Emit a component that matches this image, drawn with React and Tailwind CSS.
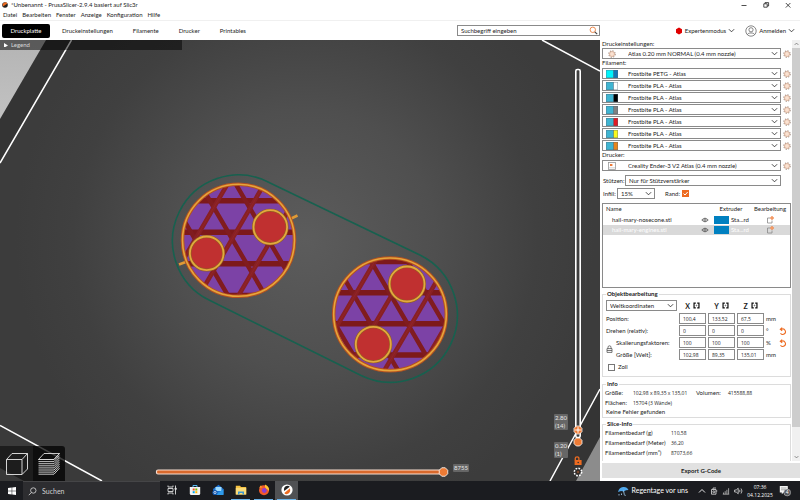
import React from 'react';

const Chevron = ({ className = 'w-[7px]' }) => (
  <svg viewBox="0 0 8 8" className={`pointer-events-none shrink-0 ${className}`} fill="none" stroke="currentColor" strokeWidth=".9">
    <path d="M1 2.5 4 5.5 7 2.5" />
  </svg>
);

const Cog = () => (
  <svg viewBox="0 0 10 10" className="w-[8px] shrink-0" fill="none">
    <circle cx="5" cy="5" r="4" stroke="#a08c80" strokeWidth="1.3" strokeDasharray="1.57 1.57" />
    <circle cx="5" cy="5" r="3.2" fill="#fbe3d3" stroke="#cfa48c" strokeWidth=".9" />
    <circle cx="5" cy="5" r="1.5" fill="#fdf3ec" stroke="#f2c4a8" strokeWidth=".6" />
  </svg>
);

const PrinterIcon = () => (
  <svg viewBox="0 0 8 8" className="w-[8px] shrink-0" fill="none">
    <rect x=".5" y=".5" width="7" height="7" fill="#fff" stroke="#9a9a9a" strokeWidth=".8" />
    <path d="M2 3h2.400" stroke="#ed6b21" strokeWidth="1.800" />
    <path d="M1 5.800h6" stroke="#d4d4d4" />
  </svg>
);

const Swatch = ({ a, b }) => (
  <svg viewBox="0 0 12 8" className="w-[12px] shrink-0">
    <rect width="12" height="8" fill={a} />
    <rect x="7.500" width="4.500" height="8" fill={b} />
    <path d="M7.500 0V8M.2 .2h11.600v7.600H.2z" fill="none" stroke="#567" strokeWidth=".5" />
  </svg>
);

const selectStyle = 'min-w-0 flex-1 appearance-none bg-transparent leading-[8px] outline-none';
const figures = "font-['Open_Sans','Noto_Sans',sans-serif] text-[5px]";

const Combo = ({ label, icon, value }) => (
  <div className="flex items-center gap-[2px]">
    <div className="flex h-[11px] min-w-0 flex-1 items-center border border-[#8a8a8a] bg-white">
      <span className="flex w-[25px] shrink-0 items-center pl-[3px]">
        <span className="flex w-[12px] justify-center">{icon}</span>
      </span>
      <select aria-label={label} className={selectStyle}>
        <option>{value}</option>
      </select>
      <Chevron className="mr-[2px] w-[7px]" />
    </div>
    <button aria-label={`${label} bearbeiten`} className="flex w-[8px]"><Cog /></button>
  </div>
);

const filaments = [
  ['Frostbite PETG - Atlas', '#00f4fb', '#1378b8'],
  ['Frostbite PLA - Atlas', '#3fb5d2', '#ffffff'],
  ['Frostbite PLA - Atlas', '#3fb5d2', '#000000'],
  ['Frostbite PLA - Atlas', '#3fb5d2', '#808080'],
  ['Frostbite PLA - Atlas', '#3fb5d2', '#e01b24'],
  ['Frostbite PLA - Atlas', '#3fb5d2', '#f8f81c'],
  ['Frostbite PLA - Atlas', '#3fb5d2', '#e8851c'],
];

function TitleBar() {
  return (
    <div className="flex h-[10px] items-center pl-[2px]">
      <svg viewBox="0 0 6 6" className="mr-[3px] w-[6px]">
        <circle cx="3" cy="3" r="2.800" fill="#222" />
        <path d="M.6 2.600A2.600 2.600 0 0 1 5.400 1.600L1 4.600z" fill="#ed6b21" />
      </svg>
      <span className="flex-1">*Unbenannt - PrusaSlicer-2.9.4 basiert auf Slic3r</span>
      <div className="flex items-center gap-[14px] pr-[8px]">
        <button aria-label="Minimieren"><svg viewBox="0 0 8 8" className="w-[8px]" stroke="#222" strokeWidth=".8"><path d="M1.500 4.500h5" /></svg></button>
        <button aria-label="Wiederherstellen"><svg viewBox="0 0 8 8" className="w-[8px]" fill="none" stroke="#222" strokeWidth=".8"><path d="M1.800 2.800h3.400v3.400H1.800zM3 2.800V1.600h3.600V5H5.200" /></svg></button>
        <button aria-label="Schließen"><svg viewBox="0 0 8 8" className="w-[8px]" fill="none" stroke="#222" strokeWidth=".8"><path d="M1.800 2 6.400 6.600M6.400 2 1.800 6.600" /></svg></button>
      </div>
    </div>
  );
}

function Header() {
  return (
    <header className="shrink-0 bg-white text-[6px] leading-[8px]">
      <TitleBar />
      <nav className="flex h-[10px] items-center gap-[5px] pl-[3px]">
        {['Datei', 'Bearbeiten', 'Fenster', 'Anzeige', 'Konfiguration', 'Hilfe'].map((m) => (
          <button key={m}>{m}</button>
        ))}
      </nav>
      <div className="flex h-[20px] items-center border-t border-[#f0f0f0] pl-[2px]">
        <button className="h-[14px] w-[48px] rounded-[2px] bg-black text-white">Druckplatte</button>
        <div className="flex flex-1 gap-[20px] pl-[12px]">
          {['Druckeinstellungen', 'Filamente', 'Drucker', 'Printables'].map((t) => (
            <button key={t}>{t}</button>
          ))}
        </div>
        <label className="flex h-[11px] w-[143px] items-center border border-[#8a8a8a] bg-white pl-[3px]">
          <input aria-label="Suche" placeholder="Suchbegriff eingeben" className="min-w-0 flex-1 bg-transparent outline-none placeholder:text-[#222]" />
          <svg viewBox="0 0 9 9" className="mr-[1px] w-[9px]" fill="none">
            <circle cx="3.800" cy="3.800" r="2.700" stroke="#ed8b50" />
            <path d="m5.800 5.800 2.400 2.400" stroke="#444" strokeWidth="1.200" />
          </svg>
        </label>
        <div className="flex w-[200px] items-center justify-end pr-[5px]">
          <button className="flex items-center">
            <svg viewBox="0 0 8 8" className="mr-[2px] w-[8px]"><path d="M4 .6 7 2.300v3.400L4 7.400 1 5.700V2.300z" fill="#e00000" /></svg>
            Expertenmodus
            <Chevron className="ml-[2px] w-[7px]" />
          </button>
          <button className="ml-[10px] flex items-center">
            <svg viewBox="0 0 12 12" className="mr-[2px] w-[12px]" fill="none" stroke="#555" strokeWidth=".7">
              <circle cx="6" cy="6" r="5.200" />
              <circle cx="6" cy="4.800" r="2.100" />
              <path d="M2.400 9.600C3 7.400 9 7.400 9.600 9.600" />
            </svg>
            Anmelden
            <Chevron className="ml-[2px] w-[7px]" />
          </button>
        </div>
      </div>
    </header>
  );
}

const octagon = (cx, cy, r) =>
  Array.from({ length: 8 }, (_, i) => {
    const t = (Math.PI / 4) * i + Math.PI / 8;
    return `${cx + r * Math.cos(t)},${cy + r * Math.sin(t)}`;
  }).join(' ');

function Infill({ id, cx, cy, r, rows, axis, back, forward, holes, hr }) {
  const slope = 0.585;
  const line = (x, s) => `M${x - s * 70} ${axis - 70}L${x + s * 70} ${axis + 70}`;
  return (
    <g>
      <clipPath id={id}><circle cx={cx} cy={cy} r={r} /></clipPath>
      <g clipPath={`url(#${id})`}>
        <circle cx={cx} cy={cy} r={r} fill="#7c42a6" />
        <path d={rows.map((y) => `M${cx - 60} ${y}h120`).join('')} stroke="#7d191b" strokeWidth="5.500" />
        <path d={back.map((x) => line(x, slope)).join('')} stroke="#801c1f" strokeWidth="4.500" />
        <path d={forward.map((x) => line(x, -slope)).join('')} stroke="#872024" strokeWidth="4.500" />
        <path d={forward.map((x) => line(x, -slope)).join('')} stroke="#9a2629" strokeWidth=".6" />
      </g>
      <circle cx={cx} cy={cy} r={r} fill="none" stroke="#b5521f" strokeWidth="3.600" />
      <circle cx={cx} cy={cy} r={r} fill="none" stroke="#e6a53c" strokeWidth="1.600" />
      {holes.map(([x, y]) => (
        <g key={x}>
          <circle cx={x} cy={y} r={hr} fill="#c03030" stroke="#94601f" strokeWidth="3" />
          <circle cx={x} cy={y} r={hr} fill="none" stroke="#e3a83e" strokeWidth="1.800" />
        </g>
      ))}
    </g>
  );
}

function Scene() {
  return (
    <svg viewBox="0 40 600 441" preserveAspectRatio="xMidYMid slice" className="absolute inset-0 h-full w-full">
      <defs>
        <radialGradient id="bed" gradientUnits="userSpaceOnUse" cx="305" cy="240" r="290">
          <stop offset="0" stopColor="#5c5c5c" />
          <stop offset=".45" stopColor="#4f4f4f" />
          <stop offset=".8" stopColor="#404040" />
          <stop offset="1" stopColor="#3c3c3c" />
        </radialGradient>
        <linearGradient id="floor" x1="0" y1="0" x2="0" y2="1">
          <stop offset="0" stopColor="#b4b4b4" />
          <stop offset="1" stopColor="#c2c2c2" />
        </linearGradient>
      </defs>
      <rect y="40" width="600" height="441" fill="url(#bed)" />
      <path d="M0 40H71.500L0 163z" fill="#343434" />
      <path d="M0 40H46L0 119z" fill="url(#floor)" />
      <path d="M542 40H600V71z" fill="#383838" />
      <path d="M600 389V481H550z" fill="#343434" />
      <path d="M600 437V481H576z" fill="#8c8c8c" />
      <path d="M0 425.500V481H102z" fill="#3a3a3a" />
      <path d="M0 468 24 481H0z" fill="#707070" />
      <path d="M71.500 40 0 163M542 40 600 71M0 425.500 102 481M600 389 550 481" stroke="#fff" strokeWidth="1.500" fill="none" />
      <path d="M267.500 181.700A66 66 0 0 0 209.500 300.300L361.600 375.700A67 67 0 0 0 420.400 255.300Z" fill="none" stroke="#17614f" strokeWidth="1.600" />
      <path d="M288 220 297.500 215.500M179 264.500 187 261.500" stroke="#e09a35" strokeWidth="2.600" />
      <Infill id="discA" cx={238.5} cy={240.3} r={56} rows={[200.7, 232.3, 263.7, 295.5]} axis={232.3}
        back={[191, 228.3, 264, 302]} forward={[199.3, 236, 275.5, 312]} holes={[[270.3, 227], [206.7, 253.3]]} hr={16.8} />
      <Infill id="discB" cx={390} cy={314.3} r={56.3} rows={[261.5, 292.7, 323.7, 355]} axis={323.7}
        back={[335, 370.7, 407.5, 444]} forward={[338.3, 375, 411.7, 447]} holes={[[407, 284], [373.3, 344.3]]} hr={17.5} />
    </svg>
  );
}

function LayerSlider() {
  return (
    <div className="absolute top-[28px] right-[16px] bottom-[3px] w-[12px]">
      <svg viewBox="0 0 12 410" preserveAspectRatio="none" className="h-full w-full" fill="none">
        <rect x="3.800" y="1.500" width="4.400" height="368" rx="1.600" fill="#3e3e3e" stroke="#fff" strokeWidth="1.600" />
        <polygon points={octagon(6, 362, 4.3)} fill="#ed7b35" stroke="#fff" strokeWidth=".8" />
        <path d="M3.200 362h5.600M6 359.200v5.600" stroke="#fff" />
        <polygon points={octagon(6, 374, 4.3)} fill="#ed7b35" stroke="#fff" strokeWidth=".8" />
        <rect x="2.600" y="392" width="7" height="5" fill="#ed6b21" />
        <path d="M3.300 392.500v-2.200q0-1.500 1.800-1.500t1.800 1.500v2" stroke="#ed6b21" strokeWidth="1.300" />
        <circle cx="6.200" cy="394.500" r=".8" fill="#333" />
        <circle cx="6" cy="404" r="3.700" stroke="#fff" strokeWidth="1.500" strokeDasharray="1.750 1.150" />
        <circle cx="6" cy="404" r="1.800" fill="#7a4a30" stroke="#222" strokeWidth=".7" />
      </svg>
      <input type="range" aria-label="Schicht" className="absolute inset-0 h-full w-full opacity-0 [writing-mode:vertical-lr]" />
    </div>
  );
}

function MoveSlider() {
  return (
    <div className="absolute right-[151px] bottom-[3px] left-[155px] h-[12px]">
      <svg viewBox="0 0 294 12" preserveAspectRatio="none" className="h-full w-full">
        <rect x="1.500" y="4" width="288" height="4" rx="1.500" fill="#d9692c" stroke="#f6ddd0" strokeWidth="1.200" />
        <polygon points={octagon(288.5, 6, 4.6)} fill="#ed7b35" stroke="#fff" strokeWidth=".8" />
      </svg>
      <input type="range" aria-label="Bewegung" className="absolute inset-0 h-full w-full opacity-0" />
    </div>
  );
}

const tag = 'absolute rounded-[1px] bg-[#666666] text-[#e6e6e6]';

function Viewport() {
  return (
    <main className="relative min-w-0 flex-1 overflow-hidden bg-[#3c3c3c] text-[6px] leading-[8px]">
      <Scene />
      <button className="absolute top-0 left-0 flex h-[10px] w-[182px] items-center bg-black/50 pl-[4px] text-[#d8d8d8]">
        <svg viewBox="0 0 5 6" className="mr-[3px] w-[4px]"><path d="M0 0 5 3 0 6z" fill="#fff" /></svg>
        Legend
      </button>
      <LayerSlider />
      <MoveSlider />
      <div className={`${tag} right-[32px] bottom-[51px] w-[14px] pl-[1px]`}>2.80<br />(14)</div>
      <div className={`${tag} right-[32px] bottom-[23px] w-[14px] pl-[1px]`}>0.20<br />(1)</div>
      <div className={`${tag} right-[131px] bottom-[9px] w-[16px] text-center`}>8755</div>
      <div className="absolute bottom-0 left-0 flex h-[35px] overflow-hidden rounded-tr-[3px]">
        <button aria-label="3D-Ansicht" className="flex w-[33px] items-center justify-center bg-black/50">
          <svg viewBox="0 0 24 24" className="w-[24px]" fill="none" stroke="#e8e8e8" strokeWidth=".9">
            <path d="M1.500 7.500H17V22.500H1.500zM1.500 7.500 7 1.500H22.500L17 7.500M22.500 1.500V17L17 22.500" />
          </svg>
        </button>
        <button aria-label="Vorschau" className="flex w-[32px] items-center justify-center bg-black/75">
          <svg viewBox="0 0 24 24" className="w-[24px]" fill="none" stroke="#dcdcdc" strokeWidth=".9">
            <path d="M1.500 7.500 7 1.500H22.500L17 7.500z" />
            <path d="M1.500 7.500H17L22.500 1.500M1.500 9.600H17L22.500 3.600M1.500 11.700H17L22.500 5.700M1.500 13.800H17L22.500 7.800M1.500 15.900H17L22.500 9.900M1.500 18H17L22.500 12M1.500 20.100H17L22.500 14.100M1.500 22.200H17L22.500 16.200" />
          </svg>
        </button>
      </div>
    </main>
  );
}

const Eye = () => (
  <svg viewBox="0 0 8 8" className="mx-auto w-[8px]" fill="none" stroke="#555" strokeWidth=".8">
    <path d="M.8 4Q4 .4 7.200 4 4 7.600.8 4z" /><circle cx="4" cy="4" r="1.200" />
  </svg>
);

const EditIcon = () => (
  <svg viewBox="0 0 8 8" className="mx-auto w-[8px]" fill="none" strokeWidth=".8">
    <path d="M4 2H1.500v5H6V4.500" stroke="#888" /><circle cx="6" cy="2" r="1.300" stroke="#ed6b21" fill="#f8c8a8" />
  </svg>
);

function ObjectList() {
  return (
    <div className="mt-[4px] h-[85px] border border-[#8a8a8a] bg-white">
      <table className="w-full table-fixed border-collapse">
        <thead>
          <tr className="h-[10px] text-left">
            <th className="p-0 pl-[3px] font-normal">Name</th>
            <th className="w-[14px] p-0" aria-label="Sichtbar" />
            <th className="w-[38px] p-0 text-center font-normal">Extruder</th>
            <th className="w-[40px] p-0 text-center font-normal">Bearbeitung</th>
          </tr>
        </thead>
        <tbody>
          {['hail-mary-nosecone.stl', 'hail-mary-engines.stl'].map((n, i) => (
            <tr key={n} className={i ? 'h-[10px] bg-[#d9d9d9] text-white' : 'h-[11px]'}>
              <td className="p-0 pl-[9px]">{n}</td>
              <td className="p-0"><Eye /></td>
              <td className="p-0"><span className="flex items-center gap-[2px] pl-[2px]"><span className="h-[8px] w-[15px] bg-[#0080c0]" />Sta...rd</span></td>
              <td className="p-0"><EditIcon /></td>
            </tr>
          ))}
        </tbody>
      </table>
    </div>
  );
}

const AxisHead = ({ axis }) => (
  <div className="flex w-[27px] items-center justify-center gap-[3px] text-[7px] font-bold">
    {axis}
    <svg viewBox="0 0 8 8" className="w-[7px]" fill="none" stroke="#111" strokeWidth="1.400">
      <path d="M3.200 1.200H1.200V6.800h2M4.800 1.200h2v5.600h-2" />
      <circle cx="4" cy="4" r=".5" strokeWidth=".6" />
    </svg>
  </div>
);

const Reset = () => (
  <svg viewBox="0 0 8 8" className="w-[8px]" fill="none" stroke="#ed6b21" strokeWidth="1.100">
    <path d="M1.500 6.200A2.700 2.700 0 1 0 2.600 2.200H1.200M3.200.6 1.300 2.200 3.200 3.800" />
  </svg>
);

const Lock = () => (
  <svg viewBox="0 0 7 8" className="w-[7px]" fill="none" stroke="#555" strokeWidth=".8">
    <path d="M1 3.600h5v3.800H1zM2 3.600V2.200Q2 .8 3.500.8T5 2.200v1.400M1 5.500h5" />
  </svg>
);

const AxisRow = ({ name, label, values, unit, reset, narrow }) => (
  <div className="flex items-center gap-[2px]">
    <span className={narrow ? 'w-[61px]' : 'w-[71px]'}>{label}</span>
    {values.map((v, j) => (
      <input key={j} aria-label={`${name} ${'XYZ'[j]}`} defaultValue={v} className={`h-[11px] w-[27px] border border-[#8a8a8a] bg-white pl-[3px] outline-none ${figures}`} />
    ))}
    <span className="w-[11px]">{unit}</span>
    {reset && <button aria-label={`${name} zurücksetzen`} className="flex"><Reset /></button>}
  </div>
);

const group = 'min-w-0 border border-[#dcdcdc] px-[2px]';
const legend = 'ml-[1px] px-[1px] font-bold leading-[8px]';

function ObjectEditor() {
  return (
    <fieldset className={`${group} mt-[2px] h-[87px]`}>
      <legend className={legend}>Objektbearbeitung</legend>
      <div className="mt-[2px] flex items-center gap-[2px] pl-px">
        <div className="flex h-[11px] w-[71px] items-center border border-[#8a8a8a] bg-white pl-[3px]">
          <select aria-label="Koordinatensystem" className={selectStyle}><option>Weltkoordinaten</option></select>
          <Chevron className="mr-[2px] w-[7px]" />
        </div>
        <AxisHead axis="X" /><AxisHead axis="Y" /><AxisHead axis="Z" />
      </div>
      <div className="mt-[2px] flex flex-col gap-[1px] pl-px">
        <AxisRow name="Position" label="Position:" values={['100,4', '133,52', '67,5']} unit="mm" />
        <AxisRow name="Drehen" label="Drehen (relativ):" values={['0', '0', '0']} unit="°" reset />
        <div className="flex items-center">
          <button aria-label="Proportionen sperren" className="flex w-[10px]"><Lock /></button>
          <div className="flex flex-col gap-[1px]">
            <AxisRow name="Skalierung" label="Skalierungsfaktoren:" values={['100', '100', '100']} unit="%" reset narrow />
            <AxisRow name="Größe" label="Größe [Welt]:" values={['102,98', '89,35', '135,01']} unit="mm" narrow />
          </div>
        </div>
      </div>
      <label className="mt-[3px] flex items-center gap-[3px] pl-[3px]">
        <input type="checkbox" className="h-[7px] w-[7px] appearance-none border border-[#777] bg-white" />Zoll
      </label>
    </fieldset>
  );
}

function Sidebar() {
  return (
    <aside className="flex w-[200px] shrink-0 flex-col bg-white text-[6px] leading-[8px]">
      <div className="flex min-h-0 flex-1">
        <div className="min-w-0 flex-1 overflow-hidden pr-[1px] pl-[2px]">
          <h2 className="h-[8px]">Druckeinstellungen:</h2>
          <Combo label="Druckeinstellungen" icon={<Cog />} value="Atlas 0.20 mm NORMAL (0.4 mm nozzle)" />
          <h2 className="h-[9px]">Filament:</h2>
          <div className="flex flex-col gap-[1px]">
            {filaments.map(([n, a, b], i) => <Combo key={i} label={`Filament ${i + 1}`} icon={<Swatch a={a} b={b} />} value={n} />)}
          </div>
          <h2 className="h-[9px]">Drucker:</h2>
          <Combo label="Drucker" icon={<PrinterIcon />} value="Creality Ender-3 V2 Atlas (0.4 mm nozzle)" />
          <label className="mt-[4px] flex items-center pr-[10px]">
            <span className="w-[23px] pl-[1px]">Stützen:</span>
            <span className="flex h-[11px] flex-1 items-center border border-[#8a8a8a] bg-white pl-[3px]">
              <select className={selectStyle}><option>Nur für Stützverstärker</option></select>
              <Chevron className="mr-[2px] w-[7px]" />
            </span>
          </label>
          <div className="mt-[2px] flex items-center">
            <label className="flex items-center">
              <span className="w-[15px] pl-[1px]">Infill:</span>
              <span className="flex h-[11px] w-[38px] items-center border border-[#8a8a8a] bg-white pl-[3px]">
                <select className={selectStyle}><option>15%</option></select>
                <Chevron className="mr-[2px] w-[7px]" />
              </span>
            </label>
            <label className="ml-[10px] flex items-center gap-[2px]">
              Rand:
              <span className="grid">
                <input type="checkbox" defaultChecked className="col-start-1 row-start-1 h-[7px] w-[7px] appearance-none bg-[#ed6b21]" />
                <svg viewBox="0 0 7 7" className="pointer-events-none col-start-1 row-start-1 w-[7px]" fill="none" stroke="#fff"><path d="M1.500 3.500 3 5 5.700 2" /></svg>
              </span>
            </label>
          </div>
          <ObjectList />
          <ObjectEditor />
          <fieldset className={`${group} mt-[3px] h-[38px]`}>
            <legend className={legend}>Info</legend>
            <dl className="grid grid-cols-[28px_63px_32px_1fr] leading-[10px]">
              <dt>Größe:</dt><dd className={figures}>102,98 x 89,35 x 135,01</dd><dt>Volumen:</dt><dd className={figures}>415588,88</dd>
              <dt>Flächen:</dt><dd className={`col-span-3 ${figures}`}>15704 (3 Wände)</dd>
            </dl>
            <p className="pl-[1px]">Keine Fehler gefunden</p>
          </fieldset>
          <fieldset className={`${group} mt-[2px]`}>
            <legend className={legend}>Slice-Info</legend>
            <dl className="grid grid-cols-[66px_1fr] leading-[10px]">
              <dt>Filamentbedarf (g)</dt><dd className={figures}>110,58</dd>
              <dt>Filamentbedarf (Meter)</dt><dd className={figures}>36,20</dd>
              <dt>Filamentbedarf (mm³)</dt><dd className={figures}>87073,66</dd>
              <dt>Kosten</dt><dd className={figures}>0,00</dd>
            </dl>
          </fieldset>
        </div>
        <div className="flex w-[8px] flex-col items-center bg-[#f0f0f0] text-[#444]">
          <Chevron className="h-[8px] w-[5px] rotate-180" />
          <div className="h-[379px] w-full bg-[#cdcdcd]" />
          <Chevron className="mt-auto h-[8px] w-[5px]" />
        </div>
      </div>
      <div className="pt-[2px] pb-[3px] pl-[2px]">
        <button className="h-[15px] w-full bg-[#e1e1e1] font-bold">Export G-Code</button>
      </div>
    </aside>
  );
}

const apps = [
  { name: 'Aufgabenansicht', art: <g fill="none" stroke="#ddd" strokeWidth=".9"><path d="M2 1.500v1.500h5V1.500M2 10.500V9h5v1.500M2 4.500h5v3H2zM9.500 1.500v9" /><path d="M9 4h1.200v1.500H9z" fill="#fff" /></g> },
  { name: 'Store', art: <g><path d="M4 3V1.500h4V3" fill="none" stroke="#58b8ee" /><path d="M.8 3h10.400v6.500q0 1.500-1.500 1.500H2.300Q.8 11 .8 9.500z" fill="#f4f4f4" /><path d="M3.700 4.500h2v2h-2z" fill="#f25022" /><path d="M6.300 4.500h2v2h-2z" fill="#7fba00" /><path d="M3.700 7.200h2v2h-2z" fill="#00a4ef" /><path d="M6.300 7.200h2v2h-2z" fill="#ffb900" /></g> },
  { name: 'Outlook', art: <g><path d="M1 5 6.500.8 11.500 5v5.500H2z" fill="#1b6fd0" /><path d="M3.500 3h6v4h-6z" fill="#9fdcff" /><path d="m2 5.500 4.700 3 4.800-3.500v6H2.500z" fill="#2f9bea" /><circle cx="3" cy="8.500" r="2.600" fill="#1256ad" /><circle cx="3" cy="8.500" r="1.100" fill="none" stroke="#fff" strokeWidth=".7" /></g> },
  { name: 'Explorer', open: true, art: <g><path d="M.8 1.800H5l1 1.200h5.200v7.500H.8z" fill="#f5c242" /><path d="M.8 4h10.400v6.500H.8z" fill="#fbdc7a" /><path d="M3 10.500V7.500h6v3H7.500V9h-3v1.500z" fill="#3b97d3" /></g> },
  { name: 'Firefox', open: true, art: <g><circle cx="6" cy="6.300" r="5" fill="#f25a2a" /><path d="M7 .6q4.800 2.300 4 6.500-1.200-2-3-2.300Q6.500 3 7 .6z" fill="#ffc532" /><path d="M1.200 4q1-2.500 2-2.800 0 1.500 1.300 2z" fill="#ff9a2a" /><circle cx="6.300" cy="6.500" r="2.400" fill="#8c3fd0" /></g> },
  { name: 'PrusaSlicer', open: true, active: true, art: <g><circle cx="6" cy="6" r="5.600" fill="#fff" /><path d="M3.200 7Q2 2.500 6.500 1.800 8.200 1.800 8.700 2.700z" fill="#222" /><path d="M9 4.200Q10 9.300 5.600 10.200 4 10.200 3.400 9z" fill="#ed6b21" /></g> },
];

function Taskbar() {
  return (
    <footer className="flex h-[19px] shrink-0 items-stretch bg-[#1b1c20] text-white">
      <button aria-label="Start" className="flex w-[23px] items-center justify-center">
        <svg viewBox="0 0 8 8" className="w-[8px]" fill="#fff"><path d="M0 1 3.700.5v3.200H0zM4.200.4 8 0v3.700H4.200zM0 4.200h3.700v3.200L0 7zM4.200 4.200H8V8l-3.800-.5z" /></svg>
      </button>
      <label className="flex w-[137px] items-center gap-[5px] border-t border-[#454547] bg-[#2d2d30] pl-[5px]">
        <svg viewBox="0 0 9 9" className="w-[9px]" fill="none" stroke="#ddd" strokeWidth=".8"><circle cx="5.300" cy="3.500" r="2.700" /><path d="M3.400 5.500.8 8.200" /></svg>
        <input aria-label="Suchen" placeholder="Suchen" className="min-w-0 flex-1 bg-transparent text-[7px] outline-none placeholder:text-[#d0d0d0]" />
      </label>
      {apps.map((a) => (
        <button key={a.name} aria-label={a.name} className={`flex w-[23px] flex-col items-center justify-between pt-[3px] ${a.active ? 'bg-[#505154]' : ''}`}>
          <svg viewBox="0 0 12 12" className="w-[12px]">{a.art}</svg>
          <span className={`h-[1px] w-[19px] ${a.open ? 'bg-[#6cb4ea]' : ''}`} />
        </button>
      ))}
      <div className="flex flex-1 items-center justify-end">
        <button className="flex items-center gap-[3px] text-[7px]">
          <svg viewBox="0 0 12 12" className="w-[12px]" fill="none"><path d="M1 7Q2 2.500 6 2t5.500 3L9 5.300 6.700 6.500 4 6z" fill="#4fa6ea" /><path d="m6.500 5.500.8 4q.2 1.300 1.400.8M2 9v1.500M4.500 8.500V10" stroke="#a8d6f8" strokeWidth=".8" /></svg>
          Regentage vor uns
        </button>
        <div className="ml-[10px] flex items-center gap-[4px]">
          <Chevron className="w-[8px] rotate-180" />
          <svg viewBox="0 0 8 8" className="w-[8px]" fill="none" stroke="#ddd" strokeWidth=".8"><path d="M1.500 2.500h4.500v4.700H1.500zM3 2.500V1h3M6 4h1.300" /><circle cx="3.800" cy="4.800" r="1" /></svg>
          <svg viewBox="0 0 8 8" className="w-[8px]" fill="none" stroke="#aaa" strokeWidth=".9"><path d="M1.500 7V5.500M3.200 7V4.200M4.900 7V2.800M6.600 7V1.200M.8 7.200h6.400" /></svg>
          <svg viewBox="0 0 9 8" className="w-[9px]" fill="none" stroke="#ddd" strokeWidth=".8"><path d="M.6 3h1.600L4.200 1.200v5.600L2.200 5H.6zM5.500 2.800q1 1.200 0 2.400M7 1.500q2 2.500 0 5" /></svg>
        </div>
        <time className={`ml-[2px] w-[30px] text-center leading-[8px] ${figures}`}>07:36<br />04.12.2025</time>
        <button aria-label="Benachrichtigungen" className="mr-[9px] ml-[4px] flex">
          <svg viewBox="0 0 12 12" className="w-[12px]"><path d="M.8 1h8v6.500H4.500L2.800 9.300V7.500h-2z" fill="#f2f2f2" /><path d="M2 3h5.500M2 4.800h4" stroke="#777" strokeWidth=".6" /><circle cx="8.200" cy="7.500" r="3.400" fill="#55565a" stroke="#ddd" strokeWidth=".5" /><text x="8.200" y="9.400" textAnchor="middle" fontSize="5" fill="#fff">4</text></svg>
        </button>
      </div>
    </footer>
  );
}

export default function App() {
  return (
    <div className="flex h-screen flex-col overflow-hidden bg-white font-[Lato,'Open_Sans',sans-serif] text-[#1c1c1c]">
      <Header />
      <div className="flex min-h-0 flex-1">
        <Viewport />
        <Sidebar />
      </div>
      <Taskbar />
    </div>
  );
}
